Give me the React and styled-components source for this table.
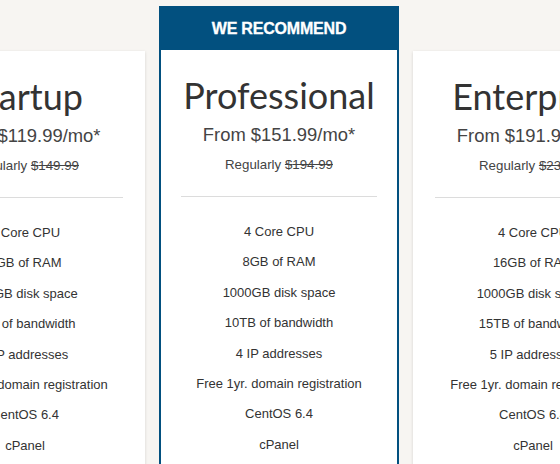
import React from 'react';
import styled, { createGlobalStyle, css } from 'styled-components';

const GlobalStyle = createGlobalStyle`
	html, body {
		margin: 0;
		padding: 0;
		background: #f7f5f2;
		overflow: hidden;
	}
	body {
		font-family: 'Liberation Sans', Arial, sans-serif;
	}
`;

const Page = styled.div`
	width: 560px;
	height: 464px;
	overflow: hidden;
	background: #f7f5f2;
`;

const Row = styled.div`
	display: flex;
	justify-content: center;
	align-items: flex-start;
	gap: 14px;
	padding: 6px 2px 0 0;
	width: 560px;
	box-sizing: border-box;
`;

const Card = styled.div`
	flex: 0 0 240px;
	width: 240px;
	box-sizing: border-box;
	background: #fff;
	height: 600px;
	${(p) =>
		p.featured
			? css`
				border: 2px solid #02507f;
				border-top: none;
			`
			: css`
				margin-top: 45px;
				box-shadow: 0 1px 3px rgba(0, 0, 0, 0.14);
			`};
`;

const Badge = styled.div`
	height: 44px;
	margin: 0 -2px;
	padding-top: 1px;
	box-sizing: border-box;
	background: #02507f;
	color: #fff;
	display: flex;
	align-items: center;
	justify-content: center;
	font-family: 'Liberation Sans', Arial, sans-serif;
	font-weight: 700;
	font-size: 16px;
	letter-spacing: -0.2px;
	-webkit-text-stroke: 0.3px #fff;
`;

const Body = styled.div`
	padding: 25px 22px 0;
	text-align: center;
	${(p) => p.featured && css`padding: 25px 20px 0;`};
`;

const Title = styled.h2`
	margin: 0;
	font-family: Lato, 'Open Sans', sans-serif;
	font-weight: 400;
	font-size: 36px;
	line-height: 40px;
	color: #333;
	white-space: nowrap;
`;

const Price = styled.div`
	margin-top: 8px;
	font-size: 18.4px;
	line-height: 24px;
	color: #444;
	white-space: nowrap;
`;

const Regular = styled.div`
	margin-top: 9px;
	font-size: 13.3px;
	line-height: 18px;
	color: #444;
	white-space: nowrap;

	s {
		color: #444;
	}
`;

const Divider = styled.hr`
	margin: 22px 0 0;
	border: none;
	border-top: 1px solid #dcdcdc;
	height: 0;
`;

const Features = styled.ul`
	list-style: none;
	margin: 20px 0 0;
	padding: 0;
`;

const Feature = styled.li`
	font-size: 13px;
	line-height: 30.4px;
	color: #333;
	white-space: nowrap;
`;

const plans = [
	{
		name: 'Startup',
		price: '119.99',
		regular: '149.99',
		features: ['4 Core CPU', '4GB of RAM', '500GB disk space', '5TB of bandwidth', '3 IP addresses', 'Free 1yr. domain registration', 'CentOS 6.4', 'cPanel']
	},
	{
		name: 'Professional',
		price: '151.99',
		regular: '194.99',
		featured: true,
		features: ['4 Core CPU', '8GB of RAM', '1000GB disk space', '10TB of bandwidth', '4 IP addresses', 'Free 1yr. domain registration', 'CentOS 6.4', 'cPanel']
	},
	{
		name: 'Enterprise',
		price: '191.99',
		regular: '239.99',
		features: ['4 Core CPU', '16GB of RAM', '1000GB disk space', '15TB of bandwidth', '5 IP addresses', 'Free 1yr. domain registration', 'CentOS 6.4', 'cPanel']
	}
];

function App() {
	return (
		<Page>
			<GlobalStyle />
			<Row>
				{plans.map((plan) => (
					<Card key={plan.name} featured={plan.featured}>
						{plan.featured ? <Badge>WE RECOMMEND</Badge> : null}
						<Body featured={plan.featured}>
							<Title>{plan.name}</Title>
							<Price>From ${plan.price}/mo*</Price>
							<Regular>
								Regularly <s>${plan.regular}</s>
							</Regular>
							<Divider />
							<Features>
								{plan.features.map((f) => <Feature key={f}>{f}</Feature>)}
							</Features>
						</Body>
					</Card>
				))}
			</Row>
		</Page>
	);
}

export default App;
